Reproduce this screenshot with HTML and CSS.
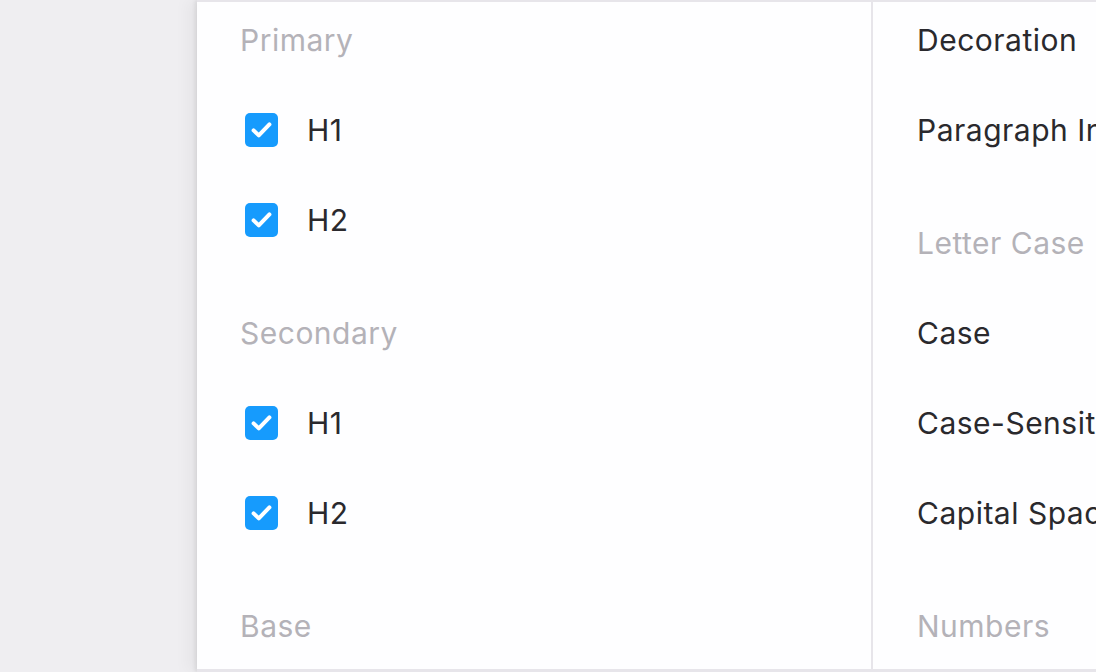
FILE: index.html
```html
<!DOCTYPE html>
<html lang="en">
<head>
<meta charset="utf-8">
<title>Text settings</title>
<link rel="stylesheet" href="styles.css">
</head>
<body>
<div class="sheet">
  <section class="panel panel-left">
    <div class="col">
      <div class="row heading">Primary</div>
      <div class="row item"><span class="check"><svg viewBox="0 0 33 33" width="33" height="33"><path d="M8.6 17.4 L13.8 22.4 L24.4 11.4" fill="none" stroke="#fff" stroke-width="4" stroke-linecap="round" stroke-linejoin="round"/></svg></span><span class="label">H1</span></div>
      <div class="row item"><span class="check"><svg viewBox="0 0 33 33" width="33" height="33"><path d="M8.6 17.4 L13.8 22.4 L24.4 11.4" fill="none" stroke="#fff" stroke-width="4" stroke-linecap="round" stroke-linejoin="round"/></svg></span><span class="label">H2</span></div>
      <div class="row heading section">Secondary</div>
      <div class="row item"><span class="check"><svg viewBox="0 0 33 33" width="33" height="33"><path d="M8.6 17.4 L13.8 22.4 L24.4 11.4" fill="none" stroke="#fff" stroke-width="4" stroke-linecap="round" stroke-linejoin="round"/></svg></span><span class="label">H1</span></div>
      <div class="row item"><span class="check"><svg viewBox="0 0 33 33" width="33" height="33"><path d="M8.6 17.4 L13.8 22.4 L24.4 11.4" fill="none" stroke="#fff" stroke-width="4" stroke-linecap="round" stroke-linejoin="round"/></svg></span><span class="label">H2</span></div>
      <div class="row heading section">Base</div>
    </div>
  </section>
  <section class="panel panel-right">
    <div class="col">
      <div class="row plain">Decoration</div>
      <div class="row plain">Paragraph Indent</div>
      <div class="row heading section">Letter Case</div>
      <div class="row plain">Case</div>
      <div class="row plain">Case-Sensitive Forms</div>
      <div class="row plain">Capital Spacing</div>
      <div class="row heading section">Numbers</div>
    </div>
  </section>
</div>
</body>
</html>
```
FILE: styles.css
```css
html, body {
  margin: 0;
  padding: 0;
}
body {
  width: 1096px;
  height: 672px;
  overflow: hidden;
  background: #efeef1;
  font-family: Inter, "Noto Sans", "Liberation Sans", sans-serif;
}
.sheet {
  margin-left: 197px;
  width: 899px;
  height: 672px;
  box-sizing: border-box;
  padding: 2px 0 3px 0;
  display: flex;
  gap: 2px;
  background: #e7e5ea;
  box-shadow: -2px 0 4px rgba(0, 0, 0, 0.08), -10px 0 14px rgba(0, 0, 0, 0.04);
  overflow: hidden;
}
.panel {
  background: #fefeff;
  overflow: hidden;
}
.panel-left {
  width: 674px;
  flex-shrink: 0;
  padding-left: 43px;
  box-sizing: border-box;
}
.panel-right {
  flex: 1;
  min-width: 0;
  padding-left: 44px;
  box-sizing: border-box;
}
.col {
  display: flex;
  flex-direction: column;
  margin-top: -7px;
}
.row {
  height: 90px;
  display: flex;
  align-items: center;
  font-size: 30px;
  white-space: nowrap;
  letter-spacing: 0.5px;
}
.row.section {
  margin-top: 23px;
}
.heading {
  color: #b4b2b8;
}
.plain, .item {
  color: #2a292d;
}
.item {
  padding-left: 5px;
}
.check {
  width: 33px;
  height: 34px;
  border-radius: 5px;
  background: #169bfd;
  display: flex;
  flex-shrink: 0;
}
.label {
  margin-left: 29px;
}
```
